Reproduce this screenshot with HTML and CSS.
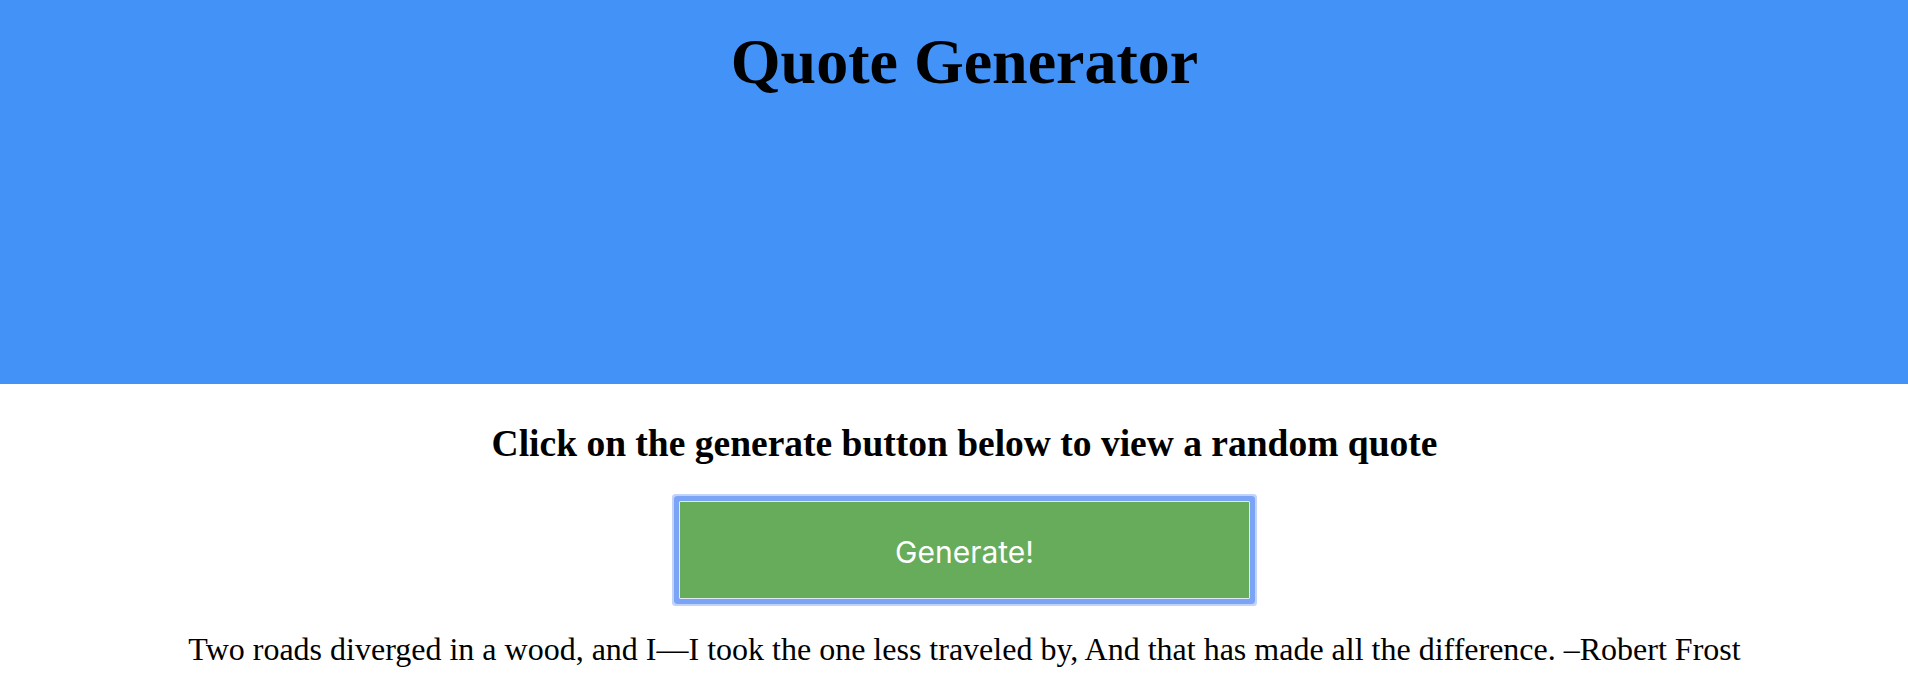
FILE: index.html
```html
<!DOCTYPE html>
<html lang="en">
<head>
<meta charset="utf-8">
<title>Quote Generator</title>
<link rel="stylesheet" href="styles.css">
</head>
<body>
<header class="header">
  <h1 class="title">Quote Generator</h1>
</header>
<main class="main">
  <h2 class="subtitle">Click on the generate button below to view a random quote</h2>
  <button class="generate" type="button">Generate!</button>
  <p class="quote">Two roads diverged in a wood, and I—I took the one less traveled by, And that has made all the difference. –Robert Frost</p>
</main>
</body>
</html>
```
FILE: styles.css
```css
html, body {
  margin: 0;
  padding: 0;
  background: #ffffff;
}
body {
  font-family: "Liberation Serif", "Times New Roman", serif;
  color: #000;
}
.header {
  background: #4292f7;
  height: 384px;
  box-sizing: border-box;
  padding: 25px 0 0 21px;
}
.title {
  margin: 0;
  font-size: 64px;
  font-weight: bold;
  text-align: center;
}
.main {
  padding-left: 21px;
  display: flex;
  flex-direction: column;
  align-items: center;
}
.subtitle {
  margin: 38px 0 0 0;
  font-size: 37.5px;
  font-weight: bold;
  text-align: center;
}
.generate {
  margin-top: 36px;
  width: 571px;
  height: 98px;
  box-sizing: border-box;
  background: #67ac5b;
  border: 1px solid #dfeaf2;
  border-radius: 1px;
  box-shadow: 0 0 0 5px #7ba4f6, 0 0 0 7px #c1d3fa;
  color: #ffffff;
  font-family: Inter, "Noto Sans", sans-serif;
  font-size: 30px;
  font-weight: 400;
  padding: 3px 0 0 0;
  cursor: pointer;
}
.quote {
  margin: 32px 0 0 0;
  font-size: 32px;
  text-align: center;
}
```
